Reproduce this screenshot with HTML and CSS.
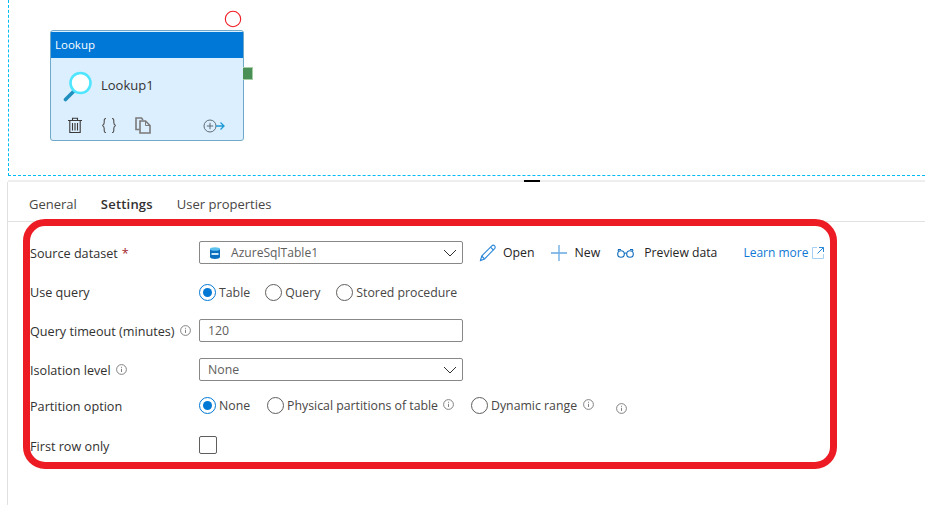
FILE: index.html
```html
<!DOCTYPE html>
<html lang="en">
<head>
<meta charset="utf-8">
<title>Lookup settings</title>
<link rel="stylesheet" href="styles.css">
</head>
<body>
<section class="canvas">
  <svg class="error-ring" width="18" height="18" viewBox="0 0 18 18"><circle cx="9" cy="9" r="7.7" fill="#fff" stroke="#f01c24" stroke-width="1.1"/></svg>
  <div class="node">
    <div class="node-head">Lookup</div>
    <div class="node-main">
      <svg class="node-icon" width="30" height="32" viewBox="0 0 30 32">
        <path d="M2.5 29.5 11 21" stroke="#1f8fbd" stroke-width="3.6" stroke-linecap="round" fill="none"/>
        <circle cx="17.5" cy="13" r="10" fill="#fff" stroke="#50e6ff" stroke-width="2.6"/>
      </svg>
      <span class="node-name">Lookup1</span>
    </div>
    <div class="node-tools">
      <svg class="tool-trash" width="14" height="17" viewBox="0 0 14 17" fill="none" stroke="#3b3a39" stroke-width="1.1"><path d="M0 3.500h14M4.500 3V1.300h5V3"/><path d="M1.800 3.700V15.500h10.400V3.700"/><path d="M4.500 6v7.500M7 6v7.500M9.500 6v7.500"/></svg>
      <svg class="tool-braces" width="16" height="17" viewBox="0 0 16 17" fill="none" stroke="#4b4a49" stroke-width="1.1"><path d="M5 1.500C3 1.500 3.200 3 3.200 5.500c0 2-.6 2.700-2 3 1.400.3 2 1 2 3 0 2.500-.2 4 1.800 4M11 1.500c2 0 1.800 1.500 1.800 4 0 2 .6 2.700 2 3-1.400.3-2 1-2 3 0 2.500.2 4-1.800 4"/></svg>
      <svg class="tool-copy" width="16" height="17" viewBox="0 0 16 17" fill="none" stroke="#7a7a7a" stroke-width="1.6"><path d="M4.500 12.500H1V1h5.500L8 3"/><path d="M5 4h5.500L15 8.500V16H5z"/><path d="M10.500 4v4.500H15" stroke-width="1"/></svg>
      <svg class="tool-link" width="22" height="14" viewBox="0 0 22 14" fill="none"><circle cx="7" cy="7" r="6" stroke="#5f6b73" stroke-width="1"/><path d="M3.800 7h6.400M7 3.800v6.400" stroke="#5f6b73" stroke-width="1"/><path d="M13 7h8M17.500 3.500 21 7l-3.500 3.500" stroke="#1e9ad6" stroke-width="1.300"/></svg>
    </div>
    <span class="node-port"></span>
  </div>
</section>
<div class="splitter"><span class="handle"></span></div>
<main class="pane">
  <nav class="tabs">
    <span class="tab">General</span>
    <span class="tab tab-active">Settings</span>
    <span class="tab">User properties</span>
  </nav>
  <form class="form">
    <div class="row">
      <span class="label">Source dataset <i class="req">*</i></span>
      <div class="select select-dataset">
        <svg class="sql" width="10" height="12" viewBox="0 0 10 12"><path d="M0 2v8c0 1.100 2.200 2 5 2s5-.9 5-2V2z" fill="#0b6fc0"/><ellipse cx="5" cy="2" rx="5" ry="1.800" fill="#5cc1ee"/><path d="M1.500 6h7v2h-7z" fill="#cfe8f8"/></svg>
        <span class="value value-dataset">AzureSqlTable1</span>
        <svg class="chev" width="14" height="8" viewBox="0 0 14 8"><path d="M1 1l6 6 6-6" fill="none" stroke="#323130" stroke-width="1"/></svg>
      </div>
      <div class="actions">
        <span class="action action-open">
          <svg width="18" height="18" viewBox="0 0 18 18" fill="none" stroke="#2b88d8" stroke-width="1.100"><path d="M1.500 16.500 2.700 12 12.800 1.900c.8-.8 2-.8 2.800 0s.8 2 0 2.800L5.500 15z"/><path d="M11.500 3.200l3 3M2.700 12l2.800 3"/></svg>
          <span>Open</span>
        </span>
        <span class="action action-new">
          <svg width="16" height="16" viewBox="0 0 16 16" fill="none" stroke="#2b88d8" stroke-width="1.100"><path d="M0 8h16"/><path d="M8 0v16" stroke="#71afe5" stroke-width="1.400"/></svg>
          <span>New</span>
        </span>
        <span class="action action-preview">
          <svg width="17" height="10" viewBox="0 0 17 10" fill="none" stroke="#0f6cbd" stroke-width="1.100"><circle cx="4" cy="6" r="3.300"/><circle cx="13" cy="6" r="3.300"/><path d="M7.300 5.500c.8-.7 1.600-.7 2.400 0M1 3 1.500 1.500H4M16 3 15.500 1.500H13"/></svg>
          <span>Preview data</span>
        </span>
        <a class="learn">Learn more
          <svg width="12" height="12" viewBox="0 0 12 12" fill="none"><path d="M5 .5H.5v11h11V7" stroke="#a6d0f2"/><path d="M7 .5h4.500V5M11.500.5 5.500 6.500" stroke="#2b88d8"/></svg>
        </a>
      </div>
    </div>
    <div class="row">
      <span class="label">Use query</span>
      <div class="radios">
        <span class="radio on r-table"><i></i>Table</span>
        <span class="radio r-query"><i></i>Query</span>
        <span class="radio"><i></i>Stored procedure</span>
      </div>
    </div>
    <div class="row">
      <span class="label">Query timeout (minutes) <svg class="info" width="11" height="11" viewBox="0 0 11 11"><use href="#i"/></svg></span>
      <div class="input">120</div>
    </div>
    <div class="row">
      <span class="label">Isolation level <svg class="info" width="11" height="11" viewBox="0 0 11 11"><use href="#i"/></svg></span>
      <div class="select">
        <span class="value value-none">None</span>
        <svg class="chev" width="14" height="8" viewBox="0 0 14 8"><path d="M1 1l6 6 6-6" fill="none" stroke="#323130" stroke-width="1"/></svg>
      </div>
    </div>
    <div class="row row-short">
      <span class="label">Partition option</span>
      <div class="radios radios-up">
        <span class="radio on r-none"><i></i>None</span>
        <span class="radio r-phys"><i></i>Physical partitions of table <svg class="info" width="11" height="11" viewBox="0 0 11 11"><use href="#i"/></svg></span>
        <span class="radio r-dyn"><i></i>Dynamic range <svg class="info" width="11" height="11" viewBox="0 0 11 11"><use href="#i"/></svg></span>
        <svg class="info info-loose" width="11" height="11" viewBox="0 0 11 11"><use href="#i"/></svg>
      </div>
    </div>
    <div class="row row-last">
      <span class="label">First row only</span>
      <span class="check"></span>
    </div>
  </form>
  <div class="highlight"></div>
</main>
<svg class="defs" width="0" height="0"><symbol id="i" viewBox="0 0 11 11"><circle cx="5.500" cy="5.500" r="4.900" fill="none" stroke="#757575" stroke-width=".9"/><path d="M5.500 4.800v3.200M5.500 2.800v1" stroke="#757575" stroke-width=".9"/></symbol></svg>
</body>
</html>
```

FILE: styles.css
```css
* { box-sizing: border-box; }
html, body { margin: 0; padding: 0; }
body {
  width: 925px;
  height: 505px;
  overflow: hidden;
  background: #fff;
  color: #323130;
  font-family: "Open Sans", "Noto Sans", "Liberation Sans", sans-serif;
  font-size: 12.3px;
  position: relative;
}
.defs { position: absolute; }
.canvas {
  position: relative;
  height: 176px;
  margin-left: 8px;
  border-left: 1px dashed #00bcf2;
  border-bottom: 1px dashed #00bcf2;
}
.error-ring { position: absolute; left: 215px; top: 10px; }
.node {
  position: absolute;
  left: 41px;
  top: 30px;
  width: 194px;
  height: 111px;
  background: #dcefff;
  border: 1px solid #6fa8c9;
  border-radius: 3px;
  display: flex;
  flex-direction: column;
}
.node-head {
  height: 26px;
  margin-top: 1px;
  padding-left: 4px;
  background: #0078d7;
  color: #fff;
  line-height: 26px;
  font-size: 11.5px;
}
.node-main {
  display: flex;
  align-items: center;
  height: 56px;
  padding-left: 12px;
  color: #333;
}
.node-name { margin-left: 8px; margin-top: -2px; font-size: 13px; }
.node-tools {
  display: flex;
  align-items: center;
  padding-left: 17px;
  margin-top: 3px;
}
.tool-braces { margin-left: 19px; }
.tool-copy { margin-left: 18px; }
.tool-link { margin-left: 52px; }
.node-port {
  position: absolute;
  left: 192px;
  top: 36px;
  width: 10px;
  height: 13px;
  background: #4a8f55;
  border: 1px solid #a6cfa8;
  border-left: 0;
}
.splitter {
  position: relative;
  height: 6px;
  margin-left: 8px;
  border-bottom: 2px solid #eeeeee;
}
.handle {
  position: absolute;
  left: 516px;
  top: 4px;
  width: 16px;
  height: 2px;
  background: #000;
}
.pane {
  position: relative;
  height: 323px;
  margin-left: 7px;
  border-left: 1px solid #e1e1e1;
}
.tabs {
  display: flex;
  gap: 24px;
  height: 40px;
  padding: 13px 0 0 21px;
  border-bottom: 1px solid #e1e1e1;
  color: #484644;
  font-size: 13px;
  line-height: 18px;
}
.tab-active { font-weight: 600; color: #323130; letter-spacing: .2px; }
.form { padding: 11px 0 0 22px; }
.row {
  display: flex;
  align-items: center;
  height: 39px;
}
.row-short { height: 33px; }
.row-last { height: 47px; }
.label {
  display: flex;
  align-items: center;
  gap: 5px;
  flex: none;
  width: 169px;
  font-size: 12.65px;
  white-space: nowrap;
}
.req { font-style: normal; color: #a4262c; margin-left: -1px; }
.select, .input {
  display: flex;
  align-items: center;
  width: 264px;
  height: 23px;
  border: 1px solid #8a8886;
  border-radius: 2px;
  background: #fff;
  color: #605e5c;
  padding-left: 8px;
}
.sql { margin-right: 11px; margin-left: 2px; }
.value-dataset { font-size: 12.1px; }
.chev { margin-left: auto; margin-right: 5px; }
.actions {
  display: flex;
  align-items: center;
}
.action { display: flex; align-items: center; color: #252423; }
.action-open { margin-left: 16px; gap: 6px; }
.action-new { margin-left: 16px; gap: 8px; }
.action-preview { margin-left: 17px; gap: 10px; font-size: 12.2px; }
.learn {
  display: flex;
  align-items: center;
  gap: 4px;
  margin-left: 26px;
  font-size: 12px;
  color: #0f78d4;
}
.radios { display: flex; align-items: center; margin-top: 2px; }
.radios-up { margin-top: 0; }
.radio { display: flex; align-items: center; gap: 3px; margin-right: 16px; color: #484644; white-space: nowrap; }
.r-table { margin-right: 15px; }
.r-query { margin-right: 16px; }
.r-none { margin-right: 17px; }
.r-phys { margin-right: 17px; }
.radio i {
  position: relative;
  display: block;
  flex: none;
  width: 17px;
  height: 17px;
  border: 1px solid #605e5c;
  border-radius: 50%;
}
.radio.on i { border-color: #0078d4; }
.radio.on i::after {
  content: "";
  position: absolute;
  left: 3px;
  top: 3px;
  width: 9px;
  height: 9px;
  border-radius: 50%;
  background: #0078d4;
}
.radio .info { margin-left: 2px; margin-top: -2px; }
.radio.r-dyn .info { margin-left: 3px; }
.info-loose { margin-left: 6px; margin-top: 5px; }
.check {
  width: 18px;
  height: 18px;
  margin-top: -2px;
  border: 1px solid #605e5c;
  border-radius: 2px;
}
.highlight {
  position: absolute;
  left: 15px;
  top: 37px;
  width: 814px;
  height: 250px;
  border: 7px solid #ed1c24;
  border-radius: 22px;
  pointer-events: none;
}
```
